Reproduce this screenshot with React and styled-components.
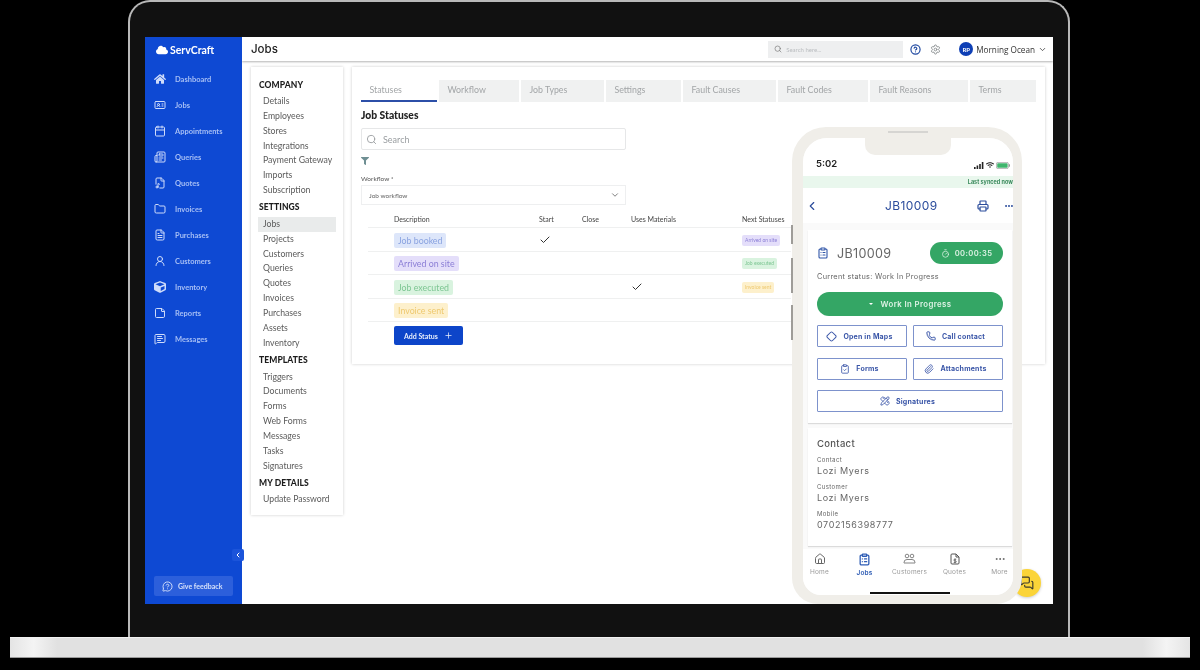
import React from 'react';
import styled, { createGlobalStyle } from 'styled-components';
import {
  IdCard, Calendar, Newspaper, FileMusic, Folder, FileText, UserRound, StickyNote, MessageSquareText,
  Search, CircleHelp, Settings, ChevronDown, ChevronLeft, Check, Plus, Printer, Ellipsis, ClipboardList,
  Timer, Diamond, Phone, ClipboardCheck, Paperclip, PencilRuler, House, MessagesSquare, MessageCircleQuestion,
} from 'lucide-react';
import { FaCloud, FaCube, FaFilter, FaHome, FaWifi } from 'react-icons/fa';

const GlobalStyle = createGlobalStyle`
  html, body { margin: 0; padding: 0; background: #000; }
  * { box-sizing: border-box; }
  body { font-family: "Lato", "Liberation Sans", sans-serif; }
`;

const Page = styled.div`
  width: 1200px;
  height: 670px;
  overflow: hidden;
  background: #000;
`;
const Laptop = styled.div`
  width: 942px;
  height: 637px;
  margin-left: 128px;
  padding: 35px 15px 0 15px;
  background: #111;
  border: 2px solid #b9b9b9;
  border-bottom: 0;
  border-radius: 22px 22px 0 0;
`;
const Base = styled.div`
  height: 21px;
  margin: 0 10px;
  border-top: 1px solid #f2f2f2;
  border-bottom: 1px solid #9a9a9a;
  background: linear-gradient(90deg, #e4e4e4 0, #f4f4f4 2%, #e1e1e1 4%, #e1e1e1 96%, #f4f4f4 98%, #e4e4e4 100%);
`;
const Screen = styled.div`
  position: relative;
  display: flex;
  width: 908px;
  height: 567px;
  background: #fff;
  overflow: hidden;
  filter: blur(0.3px);
`;

const Sidebar = styled.aside`
  position: relative;
  flex: 0 0 97px;
  display: flex;
  flex-direction: column;
  padding: 0 0 8px;
  background: #0e49d3;
`;
const Logo = styled.div`
  display: flex;
  align-items: center;
  gap: 2px;
  height: 25px;
  padding-left: 11px;
  color: #fff;
  font-size: 10.5px;
  font-weight: 700;
`;
const NavList = styled.nav`
  display: flex;
  flex-direction: column;
  margin-top: 4px;
`;
const NavItem = styled.div`
  display: flex;
  align-items: center;
  height: 26px;
  padding-left: 9px;
  color: #a7bff5;
  font-size: 7.5px;
  font-weight: 700;
  svg { flex: 0 0 12px; width: 12px; height: 12px; margin-right: 9px; color: #cfdcfa; }
`;
const Feedback = styled.div`
  display: flex;
  align-items: center;
  gap: 5px;
  width: 79px;
  height: 20px;
  margin: auto 0 0 9px;
  padding-left: 8px;
  border-radius: 2px;
  background: #2c5fdb;
  color: #d5e0fa;
  font-size: 7px;
  font-weight: 700;
`;
const Collapse = styled.div`
  position: absolute;
  right: -2px;
  top: 512px;
  width: 12px;
  height: 12px;
  display: flex;
  align-items: center;
  justify-content: center;
  border-radius: 2px;
  background: #1b54da;
  color: #fff;
`;

const Main = styled.div`
  flex: 1;
  display: flex;
  flex-direction: column;
  min-width: 0;
`;
const Header = styled.header`
  display: flex;
  align-items: center;
  flex: 0 0 24px;
  padding: 0 6.5px 0 9px;
  box-shadow: 0 1px 2px rgba(0, 0, 0, 0.3);
`;
const PageTitle = styled.h1`
  margin: 0 0 1px;
  font-size: 11.5px;
  font-weight: 500;
  color: #222;
  font-family: "Inter", sans-serif;
`;
const HeaderSearch = styled.div`
  display: flex;
  align-items: center;
  gap: 4px;
  width: 135px;
  height: 17px;
  margin-left: auto;
  padding-left: 6px;
  background: #eeeff0;
  color: #b9bcbf;
  font-size: 6px;
`;
const IconSlot = styled.span`
  display: flex;
  margin-left: ${p => p.$gap}px;
  color: ${p => p.$color};
`;
const Avatar = styled.span`
  display: flex;
  align-items: center;
  justify-content: center;
  width: 14px;
  height: 14px;
  margin-left: 18px;
  border-radius: 50%;
  background: #0e3fb5;
  color: #fff;
  font-size: 6px;
  font-weight: 700;
`;
const UserName = styled.span`
  margin: 0 2.5px 0 3px;
  color: #333;
  font-size: 8.2px;
  font-family: "Open Sans", sans-serif;
`;

const Body = styled.div`
  flex: 1;
  display: flex;
  align-items: flex-start;
  gap: 9px;
  padding: 6px 8px 0 9px;
`;
const MenuCard = styled.div`
  flex: 0 0 92px;
  height: 448px;
  padding: 11.5px 7px 0;
  background: #fff;
  box-shadow: 0 0 3px rgba(0, 0, 0, 0.2);
`;
const MenuHeading = styled.h3`
  margin: 0;
  height: 15.5px;
  line-height: 12px;
  padding-left: 1px;
  color: #1c1c1c;
  font-size: 8.5px;
  font-weight: 900;
  letter-spacing: 0.1px;
`;
const MenuGroup = styled.div`
  margin: 0 0 3.5px;
`;
const MenuLink = styled.div`
  height: 14.85px;
  line-height: 14.85px;
  padding-left: 5px;
  color: #5b5b5b;
  font-size: 8.7px;
  background: ${p => (p.$active ? '#e9ebeb' : 'transparent')};
`;

const ContentCard = styled.div`
  flex: 1;
  min-width: 0;
  height: 297px;
  padding: 13px 9px 0;
  background: #fff;
  box-shadow: 0 0 3px rgba(0, 0, 0, 0.2);
`;
const Tabs = styled.div`
  display: flex;
  gap: 2px;
`;
const Tab = styled.div`
  flex: 0 0 ${p => p.$w}px;
  height: 22px;
  line-height: 20px;
  padding-left: 8.5px;
  color: #a2a5a7;
  font-size: 8.8px;
  background: ${p => (p.$active ? '#fff' : '#f0f1f1')};
  border-bottom: 2px solid ${p => (p.$active ? '#2c4fa8' : 'transparent')};
`;
const Section = styled.h2`
  margin: 7px 0 6px;
  height: 13px;
  line-height: 13px;
  color: #222;
  font-size: 10.3px;
  font-weight: 900;
`;
const SearchBox = styled.div`
  display: flex;
  align-items: center;
  gap: 6px;
  width: 265px;
  height: 22px;
  padding-left: 4px;
  border: 1px solid #e6e7e8;
  border-radius: 2px;
  color: #9a9ea1;
  font-size: 9px;
`;
const FilterSlot = styled.div`
  display: flex;
  margin: 7px 0 0 0;
  color: #6f8f93;
`;
const FieldLabel = styled.div`
  margin-top: 10px;
  height: 8px;
  line-height: 8px;
  color: #555;
  font-size: 6.5px;
`;
const SelectBox = styled.div`
  display: flex;
  align-items: center;
  justify-content: space-between;
  width: 265px;
  height: 20px;
  margin-top: 2px;
  padding: 0 5px 0 7px;
  border: 1px solid #eeeff0;
  color: #666;
  font-size: 6.5px;
`;
const TableRow = styled.div`
  display: grid;
  grid-template-columns: 145px 43px 49px 111px 1fr;
  align-items: center;
  width: 423px;
  height: ${p => p.$h}px;
  margin-left: 7px;
  padding: ${p => p.$top}px 0 0 26px;
  border-bottom: 1px solid #eff0f0;
`;
const HeadCell = styled.div`
  color: #444;
  font-size: 7px;
`;
const PillCell = styled.div`
  display: flex;
  align-items: center;
`;
const StatusPill = styled.span`
  height: 15px;
  line-height: 15px;
  padding: 0 4px;
  border-radius: 2px;
  background: ${p => p.$bg};
  color: ${p => p.$fg};
  font-size: 8.8px;
`;
const NextPill = styled.span`
  height: 11px;
  line-height: 11px;
  padding: 0 3px;
  border-radius: 2px;
  background: ${p => p.$bg};
  color: ${p => p.$fg};
  font-size: 5px;
  white-space: nowrap;
`;
const TickCell = styled.div`
  display: flex;
  color: #333;
`;
const AddButton = styled.button`
  display: flex;
  align-items: center;
  gap: 6px;
  width: 69px;
  height: 19px;
  margin: 4px 0 0 33px;
  padding: 0 0 0 10px;
  border: 0;
  border-radius: 2px;
  background: #0d45c9;
  color: #e8eefc;
  font-family: inherit;
  font-size: 7px;
  font-weight: 700;
`;

const ChatBubble = styled.div`
  position: absolute;
  left: 868px;
  top: 532px;
  width: 28px;
  height: 28px;
  display: flex;
  align-items: center;
  justify-content: center;
  border-radius: 50%;
  background: #fbd438;
  color: #3c3a2c;
  box-shadow: 0 1px 3px rgba(0, 0, 0, 0.2);
`;

/* phone mockup sits over the right side of the page */
const PhoneFrame = styled.div`
  position: absolute;
  left: 647px;
  top: 90px;
  width: 230px;
  height: 477px;
  padding: 11px 9px 9px 11px;
  border-radius: 34px 34px 26px 26px;
  background: #f0eee9;
  font-family: "Inter", sans-serif;
`;
const SideKey = styled.span`
  position: absolute;
  left: -1px;
  top: ${p => p.$top}px;
  width: 2px;
  height: ${p => p.$h}px;
  background: #9e9c98;
`;
const Speaker = styled.span`
  position: absolute;
  left: 96px;
  top: 4px;
  width: 40px;
  height: 2px;
  background: #d6d5d2;
`;
const Notch = styled.div`
  position: absolute;
  left: 73px;
  top: 11px;
  width: 86px;
  height: 17px;
  border-radius: 0 0 10px 10px;
  background: #f0eee9;
`;
const PhoneScreen = styled.div`
  display: flex;
  flex-direction: column;
  height: 100%;
  overflow: hidden;
  border-radius: 24px 24px 18px 18px;
  background: #fafafa;
`;
const StatusBar = styled.div`
  display: flex;
  align-items: flex-end;
  justify-content: space-between;
  flex: 0 0 32px;
  padding: 0 3px 1px 13px;
  background: #fff;
  color: #222;
  font-size: 9.5px;
  font-weight: 600;
`;
const StatusIcons = styled.div`
  display: flex;
  align-items: center;
  gap: 2px;
`;
const SyncBar = styled.div`
  flex: 0 0 18px;
  padding: 7px 0 0;
  text-align: right;
  background: linear-gradient(#fff 0, #fff 6px, #e9f7ed 6px);
  color: #3a8a5c;
  font-size: 5.5px;
  font-weight: 700;
  line-height: 11px;
`;
const PhoneNav = styled.div`
  display: flex;
  align-items: center;
  flex: 0 0 35px;
  padding: 0 0 0 2px;
  background: #fff;
  color: #2b4c9c;
`;
const PhoneTitle = styled.div`
  flex: 1;
  margin-left: 66px;
  font-size: 12px;
  letter-spacing: 0.4px;
`;
const NavActions = styled.div`
  display: flex;
  align-items: center;
  gap: 15px;
  margin-right: -1px;
`;
const PhoneCard = styled.div`
  margin: ${p => p.$top}px 1px 0 5px;
  padding: ${p => p.$pad};
  background: #fff;
  box-shadow: 0 1px 1px rgba(0, 0, 0, 0.12);
`;
const JobRow = styled.div`
  display: flex;
  align-items: center;
  height: 22px;
  color: #2f55a8;
`;
const JobNumber = styled.div`
  flex: 1;
  margin-left: 8px;
  color: #666;
  font-size: 12.6px;
  letter-spacing: 0.3px;
`;
const TimerPill = styled.div`
  display: flex;
  align-items: center;
  justify-content: center;
  gap: 5px;
  width: 73px;
  height: 22px;
  border-radius: 11px;
  background: #34a665;
  color: #dff3e6;
  font-size: 7.6px;
  font-weight: 600;
  letter-spacing: 0.4px;
`;
const StatusLine = styled.div`
  margin-top: 8px;
  color: #666;
  font-size: 7.3px;
  letter-spacing: 0.3px;
`;
const ProgressButton = styled.div`
  display: flex;
  align-items: center;
  justify-content: center;
  gap: 8px;
  height: 24px;
  margin: 11px 0 9px;
  border-radius: 12px;
  background: #34a665;
  color: #dff3e6;
  font-size: 7.8px;
  font-weight: 600;
  letter-spacing: 0.4px;
`;
const Caret = styled.span`
  width: 0;
  height: 0;
  border: 2px solid transparent;
  border-top: 2px solid #fff;
  margin-top: 2px;
`;
const ActionGrid = styled.div`
  display: grid;
  grid-template-columns: 1fr 1fr;
  gap: 10.5px 6px;
`;
const ActionButton = styled.div`
  grid-column: ${p => (p.$wide ? '1 / 3' : 'auto')};
  display: flex;
  align-items: center;
  justify-content: center;
  gap: 6px;
  height: 22px;
  padding-right: 5px;
  border: 1px solid #7d92cc;
  border-radius: 1px;
  color: #3a56a8;
  font-size: 7px;
  font-weight: 700;
  letter-spacing: 0.2px;
`;
const ContactTitle = styled.div`
  color: #555;
  font-size: 9.5px;
  font-weight: 500;
  letter-spacing: 0.3px;
`;
const ContactLabel = styled.div`
  margin-top: ${p => p.$top}px;
  color: #666;
  font-size: 6px;
  letter-spacing: 0.4px;
`;
const ContactValue = styled.div`
  margin-top: 2px;
  color: #666;
  font-size: 9px;
  letter-spacing: 0.6px;
`;
const TabBar = styled.div`
  position: relative;
  flex: 1;
  display: grid;
  grid-template-columns: repeat(5, 45px);
  margin: 3px 0 0 -6px;
  padding: 4px 0 0 0;
  background: #fff;
`;
const TabBarItem = styled.div`
  display: flex;
  flex-direction: column;
  align-items: center;
  gap: 3px;
  color: ${p => (p.$active ? '#2f5db5' : '#666')};
  font-size: 6.5px;
  span { color: ${p => (p.$active ? '#2f5db5' : '#9a9a9a')}; font-weight: ${p => (p.$active ? 600 : 400)}; letter-spacing: 0.2px; }
`;
const HomeBar = styled.span`
  position: absolute;
  left: 73px;
  bottom: 1px;
  width: 80px;
  height: 2px;
  background: #111;
`;

const navItems = [
  [FaHome, 'Dashboard'], [IdCard, 'Jobs'], [Calendar, 'Appointments'], [Newspaper, 'Queries'],
  [FileMusic, 'Quotes'], [Folder, 'Invoices'], [FileText, 'Purchases'], [UserRound, 'Customers'],
  [FaCube, 'Inventory'], [StickyNote, 'Reports'], [MessageSquareText, 'Messages'],
];
const menu = [
  ['COMPANY', ['Details', 'Employees', 'Stores', 'Integrations', 'Payment Gateway', 'Imports', 'Subscription']],
  ['SETTINGS', ['Jobs', 'Projects', 'Customers', 'Queries', 'Quotes', 'Invoices', 'Purchases', 'Assets', 'Inventory']],
  ['TEMPLATES', ['Triggers', 'Documents', 'Forms', 'Web Forms', 'Messages', 'Tasks', 'Signatures']],
  ['MY DETAILS', ['Update Password']],
];
const tabs = [
  ['Statuses', 76], ['Workflow', 80], ['Job Types', 83], ['Settings', 75],
  ['Fault Causes', 93], ['Fault Codes', 90], ['Fault Reasons', 98], ['Terms', 66],
];
const rows = [
  { name: 'Job booked', bg: '#dde6fa', fg: '#8aa3e0', start: true, next: 'Arrived on site', nbg: '#e4defa', nfg: '#8b7ed6' },
  { name: 'Arrived on site', bg: '#e4defa', fg: '#8b7ed6', next: 'Job executed', nbg: '#d9f3df', nfg: '#7cc592' },
  { name: 'Job executed', bg: '#d9f3df', fg: '#7cc592', mat: true, next: 'Invoice sent', nbg: '#fdf0cc', nfg: '#eec970' },
  { name: 'Invoice sent', bg: '#fdf0cc', fg: '#eec970' },
];

function SignalBars() {
  return (
    <svg width="10" height="7" viewBox="0 0 10 7" fill="#222">
      <rect x="0" y="5" width="1.6" height="2" />
      <rect x="2.6" y="3.5" width="1.6" height="3.5" />
      <rect x="5.2" y="2" width="1.6" height="5" />
      <rect x="7.8" y="0" width="1.6" height="7" />
    </svg>
  );
}

function BatteryGreen() {
  return (
    <svg width="14" height="7" viewBox="0 0 14 7">
      <rect x="0.4" y="0.4" width="12" height="6.2" rx="1.5" fill="none" stroke="#999" strokeWidth="0.7" />
      <rect x="1.2" y="1.2" width="10.4" height="4.6" rx="0.8" fill="#3fb56d" />
      <rect x="13" y="2.3" width="1" height="2.4" fill="#999" />
    </svg>
  );
}

function PeopleIcon() {
  return (
    <svg width="13" height="12" viewBox="0 0 13 12" fill="none" stroke="#777" strokeWidth="0.9">
      <circle cx="4" cy="3" r="1.8" />
      <circle cx="9" cy="3" r="1.8" />
      <path d="M1 9.5a3 3 0 0 1 3-3h5a3 3 0 0 1 3 3v.5H1z" />
    </svg>
  );
}

function QuoteDocIcon() {
  return (
    <svg width="12" height="12" viewBox="0 0 24 24" fill="none" stroke="#555" strokeWidth="2" strokeLinejoin="round">
      <path d="M14 2H6a2 2 0 0 0-2 2v16a2 2 0 0 0 2 2h12a2 2 0 0 0 2-2V8z" />
      <path d="M14 2v6h6" />
      <path d="M14.5 12.5h-3.2a1.6 1.6 0 0 0 0 3.2h1.6a1.6 1.6 0 0 1 0 3.2H9.5M12 11v9.5" strokeWidth="1.6" />
    </svg>
  );
}

function PhoneMock() {
  return (
    <PhoneFrame>
      <SideKey $top={98} $h={19} />
      <SideKey $top={131} $h={35} />
      <SideKey $top={178} $h={35} />
      <Speaker />
      <PhoneScreen>
        <StatusBar>
          5:02
          <StatusIcons>
            <SignalBars />
            <FaWifi size={8} />
            <BatteryGreen />
          </StatusIcons>
        </StatusBar>
        <SyncBar>Last synced now</SyncBar>
        <PhoneNav>
          <ChevronLeft size={14} />
          <PhoneTitle>JB10009</PhoneTitle>
          <NavActions>
            <Printer size={12} strokeWidth={2.4} />
            <Ellipsis size={10} strokeWidth={3} />
          </NavActions>
        </PhoneNav>
        <PhoneCard $top={7} $pad="12px 9px 11px">
          <JobRow>
            <ClipboardList size={12} strokeWidth={2.2} />
            <JobNumber>JB10009</JobNumber>
            <TimerPill><Timer size={9} />00:00:35</TimerPill>
          </JobRow>
          <StatusLine>Current status: Work In Progress</StatusLine>
          <ProgressButton><Caret />Work In Progress</ProgressButton>
          <ActionGrid>
            <ActionButton><Diamond size={11} strokeWidth={2.2} />Open in Maps</ActionButton>
            <ActionButton><Phone size={10} strokeWidth={2.4} />Call contact</ActionButton>
            <ActionButton><ClipboardCheck size={10} />Forms</ActionButton>
            <ActionButton><Paperclip size={10} />Attachments</ActionButton>
            <ActionButton $wide><PencilRuler size={10} />Signatures</ActionButton>
          </ActionGrid>
        </PhoneCard>
        <PhoneCard $top={5} $pad="10px 9px 16px">
          <ContactTitle>Contact</ContactTitle>
          <ContactLabel $top={7}>Contact</ContactLabel>
          <ContactValue>Lozi Myers</ContactValue>
          <ContactLabel $top={7}>Customer</ContactLabel>
          <ContactValue>Lozi Myers</ContactValue>
          <ContactLabel $top={7}>Mobile</ContactLabel>
          <ContactValue>0702156398777</ContactValue>
        </PhoneCard>
        <TabBar>
          <TabBarItem><House size={12} /><span>Home</span></TabBarItem>
          <TabBarItem $active><ClipboardList size={13} strokeWidth={2.4} /><span>Jobs</span></TabBarItem>
          <TabBarItem><PeopleIcon /><span>Customers</span></TabBarItem>
          <TabBarItem><QuoteDocIcon /><span>Quotes</span></TabBarItem>
          <TabBarItem><Ellipsis size={12} /><span>More</span></TabBarItem>
          <HomeBar />
        </TabBar>
      </PhoneScreen>
      <Notch />
    </PhoneFrame>
  );
}

export default function App() {
  return (
    <Page>
      <GlobalStyle />
      <Laptop>
        <Screen>
          <Sidebar>
            <Logo><FaCloud size={12} />ServCraft</Logo>
            <NavList>
              {navItems.map(([Icon, label]) => (
                <NavItem key={label}><Icon />{label}</NavItem>
              ))}
            </NavList>
            <Feedback><MessageCircleQuestion size={11} />Give feedback</Feedback>
            <Collapse><ChevronLeft size={8} strokeWidth={3} /></Collapse>
          </Sidebar>
          <Main>
            <Header>
              <PageTitle>Jobs</PageTitle>
              <HeaderSearch><Search size={8} color="#777" />Search here...</HeaderSearch>
              <IconSlot $gap={7} $color="#1f48a0"><CircleHelp size={11} strokeWidth={2.6} /></IconSlot>
              <IconSlot $gap={9} $color="#8b8f92"><Settings size={11} /></IconSlot>
              <Avatar>RP</Avatar>
              <UserName>Morning Ocean</UserName>
              <IconSlot $gap={0} $color="#333"><ChevronDown size={9} /></IconSlot>
            </Header>
            <Body>
              <MenuCard>
                {menu.map(([heading, links]) => (
                  <div key={heading}>
                    <MenuHeading>{heading}</MenuHeading>
                    <MenuGroup>
                      {links.map(link => (
                        <MenuLink key={link} $active={heading === 'SETTINGS' && link === 'Jobs'}>{link}</MenuLink>
                      ))}
                    </MenuGroup>
                  </div>
                ))}
              </MenuCard>
              <ContentCard>
                <Tabs>
                  {tabs.map(([label, w], i) => (
                    <Tab key={label} $w={w} $active={i === 0}>{label}</Tab>
                  ))}
                </Tabs>
                <Section>Job Statuses</Section>
                <SearchBox><Search size={11} />Search</SearchBox>
                <FilterSlot><FaFilter size={8} /></FilterSlot>
                <FieldLabel>Workflow *</FieldLabel>
                <SelectBox>Job workflow<ChevronDown size={10} /></SelectBox>
                <TableRow $h={23} $top={5}>
                  <HeadCell>Description</HeadCell>
                  <HeadCell>Start</HeadCell>
                  <HeadCell>Close</HeadCell>
                  <HeadCell>Uses Materials</HeadCell>
                  <HeadCell>Next Statuses</HeadCell>
                </TableRow>
                {rows.map(r => (
                  <TableRow key={r.name} $h={23.5} $top={2}>
                    <PillCell><StatusPill $bg={r.bg} $fg={r.fg}>{r.name}</StatusPill></PillCell>
                    <TickCell>{r.start && <Check size={12} />}</TickCell>
                    <div />
                    <TickCell>{r.mat && <Check size={12} />}</TickCell>
                    <PillCell>{r.next && <NextPill $bg={r.nbg} $fg={r.nfg}>{r.next}</NextPill>}</PillCell>
                  </TableRow>
                ))}
                <AddButton>Add Status<Plus size={9} /></AddButton>
              </ContentCard>
            </Body>
          </Main>
          <ChatBubble><MessagesSquare size={14} /></ChatBubble>
          <PhoneMock />
        </Screen>
      </Laptop>
      <Base />
    </Page>
  );
}
